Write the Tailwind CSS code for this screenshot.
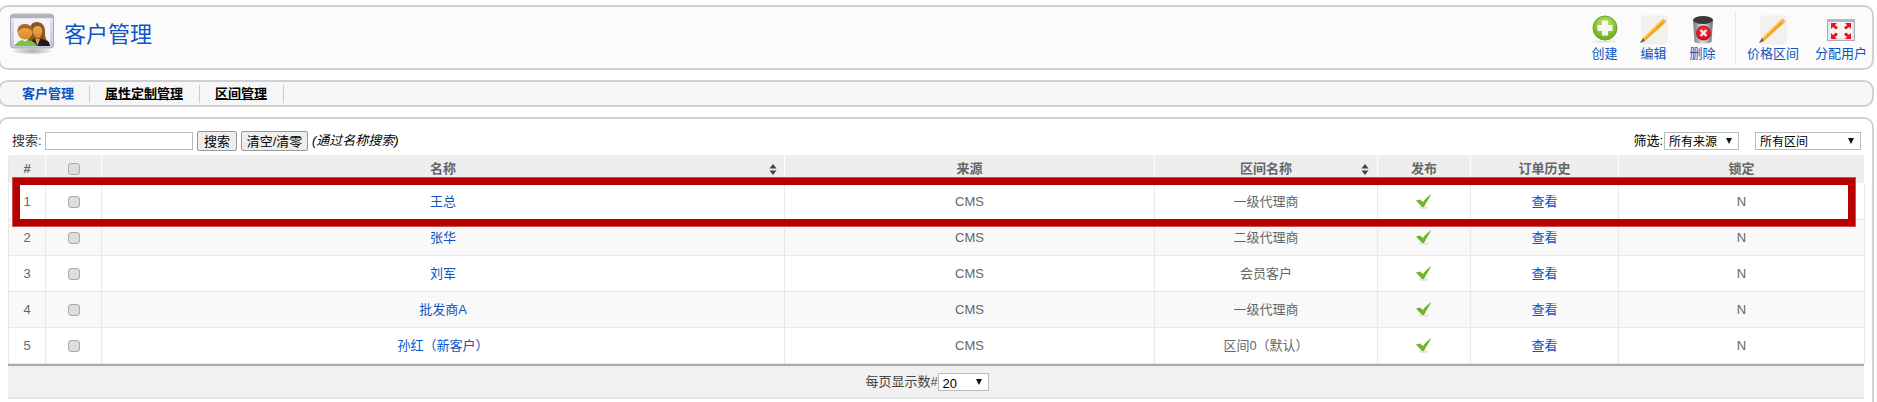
<!DOCTYPE html>
<html lang="zh">
<head>
    <meta charset="UTF-8">
    <title>客户管理</title>
    <script src="https://cdn.jsdelivr.net/npm/@tailwindcss/browser@4"></script>
</head>
<body class="bg-white h-screen overflow-hidden font-['Liberation_Sans','Noto_Sans_CJK_SC',sans-serif] text-[13px] text-[#666]">
    <!-- Title bar -->
    <header class="ml-[-2px] mt-[5px] w-[1876px] h-[65px] flex items-stretch justify-between bg-[#fbfbfb] border-2 border-[#d0d0d0] rounded-[10px]">
        <div class="flex items-center pl-[10px]">
            <svg class="w-[44px] h-[42px] mt-[-8px]" viewBox="0 0 44 42">
                <defs>
                    <linearGradient id="win" x1="0" y1="0" x2="0" y2="1"><stop offset="0" stop-color="#e8e8ee"/><stop offset="1" stop-color="#c4c6d2"/></linearGradient>
                    <linearGradient id="skin" x1="0" y1="0" x2="0" y2="1"><stop offset="0" stop-color="#f0a94e"/><stop offset="1" stop-color="#d98a2a"/></linearGradient>
                    <radialGradient id="shade"><stop offset="0" stop-color="#aaa"/><stop offset="1" stop-color="#eee"/></radialGradient>
                </defs>
                <ellipse cx="22" cy="38" rx="19" ry="3.500" fill="url(#shade)"/>
                <rect x="0.500" y="1" width="43" height="34" rx="3" fill="url(#win)" stroke="#a8aab2"/>
                <rect x="1" y="1.500" width="42" height="3.500" fill="#b2b3b9"/>
                <rect x="4" y="6" width="36" height="25" fill="#f3f3fa"/>
                <path d="M27 9c-5 0-7 3-7 8 0 5-1 8-3 11l4 3h17v-3c-3-2-3-6-3-10 0-5-3-9-8-9z" fill="#8c5522"/>
                <path d="M28 13c3 0 5 3 4 7-1 3-2 5-4 5s-4-2-5-5c-1-4 1-7 5-7z" fill="url(#skin)"/>
                <path d="M23 26h9l7 3 1 4H21z" fill="#1c1c1c"/>
                <path d="M25 26l2.500 7 2.500-7z" fill="#e39a3d"/>
                <circle cx="15" cy="19" r="7.500" fill="url(#skin)"/>
                <path d="M7.500 19c-.5-5 3-8 7.500-8s8 3 7.500 8c-2-3-5-4-7.500-4s-5.500 1-7.500 4z" fill="#a8651f"/>
                <path d="M5 33c1-3 3-5 7-6l3 1.500 3-1.500c5 1 8 3 9 6z" fill="#7cc143"/>
            </svg>
            <h1 class="ml-[10px] mt-[-6px] text-[22px] text-[#0b55c4] font-normal leading-none">客户管理</h1>
        </div>
        <div class="flex items-center text-[13px] text-[#0b55c4]">
            <a class="w-[49px] flex flex-col items-center" href="#create">
                <svg class="w-[28px] h-[28px]" viewBox="0 0 28 28">
                    <defs><radialGradient id="grn" cx="0.5" cy="0.35" r="0.7"><stop offset="0" stop-color="#c9ee6c"/><stop offset="1" stop-color="#5da315"/></radialGradient></defs>
                    <ellipse cx="14" cy="26.500" rx="13" ry="1.200" fill="#e4e4e4"/>
                    <circle cx="14" cy="13" r="12" fill="url(#grn)" stroke="#6aa81f"/>
                    <path d="M11 5.500h6v4.500h4.500v6H17v4.500h-6V16H6.500v-6H11z" fill="#f7f7ef"/>
                </svg>
                <span class="mt-[3px] leading-[15px]">创建</span>
            </a>
            <a class="w-[49px] flex flex-col items-center" href="#edit">
                <svg class="w-[28px] h-[30px] mb-[-2px]" viewBox="0 0 28 30">
                    <path d="M2 1h25v25l-3 3H2z" fill="#f3f1ed" stroke="#e8e6e2" stroke-width="0.600"/>
                    <path d="M0 28L3 23 22 5l3 3L5 26z" fill="#f3a51f"/>
                    <path d="M3 23L21.500 4.500l1 1L4 24z" fill="#fbd25e"/>
                    <path d="M22 5l1.500-1.500 3 3L25 8z" fill="#f2a893"/>
                    <path d="M0 28l3-5 2 3z" fill="#666"/>
                </svg>
                <span class="mt-[3px] leading-[15px]">编辑</span>
            </a>
            <a class="w-[49px] flex flex-col items-center" href="#delete">
                <svg class="w-[24px] h-[30px] mb-[-2px]" viewBox="0 0 24 30">
                    <defs>
                        <linearGradient id="can" x1="0" y1="0" x2="1" y2="0"><stop offset="0" stop-color="#777a80"/><stop offset="0.500" stop-color="#dfe0e3"/><stop offset="1" stop-color="#6e7075"/></linearGradient>
                        <radialGradient id="red" cx="0.5" cy="0.4" r="0.6"><stop offset="0" stop-color="#f5404a"/><stop offset="1" stop-color="#c20815"/></radialGradient>
                    </defs>
                    <path d="M2 5h20l-1.500 22c-3 2-14 2-17 0z" fill="url(#can)"/>
                    <ellipse cx="12" cy="5" rx="10" ry="4" fill="#3a3a3a"/>
                    <circle cx="12.500" cy="18" r="7.500" fill="url(#red)"/>
                    <path d="M9.500 15l6 6m0-6l-6 6" stroke="#f4e8e8" stroke-width="2.400"/>
                </svg>
                <span class="mt-[3px] leading-[15px]">删除</span>
            </a>
            <div class="ml-[8px] h-[53px] w-px bg-[#e8e8e8]"></div>
            <a class="w-[74px] flex flex-col items-center" href="#price">
                <svg class="w-[28px] h-[30px] mb-[-2px]" viewBox="0 0 28 30">
                    <path d="M2 1h25v25l-3 3H2z" fill="#f3f1ed" stroke="#e8e6e2" stroke-width="0.600"/>
                    <path d="M0 28L3 23 22 5l3 3L5 26z" fill="#f3a51f"/>
                    <path d="M3 23L21.500 4.500l1 1L4 24z" fill="#fbd25e"/>
                    <path d="M22 5l1.500-1.500 3 3L25 8z" fill="#f2a893"/>
                    <path d="M0 28l3-5 2 3z" fill="#666"/>
                </svg>
                <span class="mt-[3px] leading-[15px]">价格区间</span>
            </a>
            <a class="w-[62px] flex flex-col items-center" href="#assign">
                <svg class="w-[28px] h-[28px]" viewBox="0 0 28 28">
                    <rect x="0.500" y="4.500" width="27" height="21" fill="#e4e6ee" stroke="#aab" stroke-width="1"/>
                    <rect x="0" y="4" width="28" height="3" fill="#b5b7c0"/>
                    <rect x="3" y="7" width="22" height="16" fill="#f4f5f9"/>
                    <path d="M4 8h6l-2 2 3 2.500-2 2-3-2.500-2 2zM24 8v6l-2-2-3 2.500-2-2 3-2.500-2-2zM4 24v-6l2 2 3-2.500 2 2-3 2.500 2 2zM24 24h-6l2-2-3-2.500 2-2 3 2.500 2-2z" fill="#e8141c"/>
                </svg>
                <span class="mt-[3px] leading-[15px]">分配用户</span>
            </a>
        </div>
    </header>

    <!-- Sub menu -->
    <nav class="ml-[-2px] mt-[10px] w-[1876px] h-[27px] flex items-center bg-[#f6f6f6] border-2 border-[#d0d0d0] rounded-[10px] text-[13px] font-bold">
        <a class="pl-[22px] pr-[15px] text-[#0b55c4] border-r border-[#ccc] leading-[18px]" href="#customers">客户管理</a>
        <a class="pl-[15px] pr-[16px] text-black underline [text-decoration-skip-ink:none] border-r border-[#ccc] leading-[18px]" href="#attrs">属性定制管理</a>
        <a class="pl-[15px] pr-[16px] text-black underline [text-decoration-skip-ink:none] border-r border-[#ccc] leading-[18px]" href="#zones">区间管理</a>
    </nav>

    <!-- Content -->
    <main class="relative ml-[-2px] mt-[10px] w-[1876px] h-[300px] bg-white border-2 border-b-0 border-[#d0d0d0] rounded-t-[10px] pl-[8px] pr-[10px]">
        <form class="flex items-center justify-between h-[20px] mt-[12px] text-[#333]" onsubmit="return false;">
            <div class="flex items-center">
                <label class="ml-[4px] w-[33px]">搜索:</label>
                <input type="text" class="w-[148px] h-[18px] bg-white border border-[#bbb]">
                <button class="ml-[4px] w-[40px] h-[20px] bg-[#eee] border border-[#999] rounded-[2px] text-black">搜索</button>
                <button class="ml-[4px] w-[67px] h-[20px] bg-[#eee] border border-[#999] rounded-[2px] text-black">清空/清零</button>
                <em class="ml-[4px] text-black">(通过名称搜索)</em>
            </div>
            <div class="flex items-center pr-[1px]">
                <label class="mr-[1px] text-black">筛选:</label>
                <div class="relative">
                    <select class="block appearance-none w-[75px] h-[18px] pl-[4px] bg-white border border-[#bbb] text-black text-[12px]"><option>所有来源</option></select>
                    <svg class="absolute right-[7px] top-[6px] w-[6px] h-[6px] pointer-events-none" viewBox="0 0 6 6"><path d="M0 0h6L3 6z" fill="#111"/></svg>
                </div>
                <div class="relative ml-[16px]">
                    <select class="block appearance-none w-[106px] h-[18px] pl-[4px] bg-white border border-[#bbb] text-black text-[12px]"><option>所有区间</option></select>
                    <svg class="absolute right-[7px] top-[6px] w-[6px] h-[6px] pointer-events-none" viewBox="0 0 6 6"><path d="M0 0h6L3 6z" fill="#111"/></svg>
                </div>
            </div>
        </form>

        <table class="mt-[3px] w-[1856px] table-fixed border-collapse text-center">
            <colgroup>
                <col class="w-[37px]"><col class="w-[56px]"><col class="w-[683px]"><col class="w-[370px]">
                <col class="w-[223px]"><col class="w-[93px]"><col class="w-[148px]"><col class="w-[246px]">
            </colgroup>
            <thead class="bg-[#eee] font-bold text-[#666]">
                <tr class="h-[29px]">
                    <th class="border border-white border-l-[#e8e8e8]">#</th>
                    <th class="border border-white"><input type="checkbox" class="appearance-none block mx-auto w-[12px] h-[12px] rounded-[3px] bg-[#ddd] border border-[#aaa]"></th>
                    <th class="relative border border-white">名称<svg class="absolute right-[7px] top-[9px] w-[8px] h-[11px]" viewBox="0 0 8 11"><path d="M4 0l3.500 4.500h-7zM4 11L.5 6.500h7z" fill="#444"/></svg></th>
                    <th class="border border-white">来源</th>
                    <th class="relative border border-white">区间名称<svg class="absolute right-[8px] top-[9px] w-[8px] h-[11px]" viewBox="0 0 8 11"><path d="M4 0l3.500 4.500h-7zM4 11L.5 6.500h7z" fill="#444"/></svg></th>
                    <th class="border border-white">发布</th>
                    <th class="border border-white">订单历史</th>
                    <th class="border border-white">锁定</th>
                </tr>
            </thead>
            <tbody>
                <tr class="h-[36px] bg-white">
                    <td class="border border-[#e8e8e8]">1</td>
                    <td class="border border-[#e8e8e8]"><input type="checkbox" class="appearance-none block mx-auto w-[12px] h-[12px] rounded-[3px] bg-[#ddd] border border-[#aaa]"></td>
                    <td class="border border-[#e8e8e8]"><a class="text-[#0b55c4]" href="#1">王总</a></td>
                    <td class="border border-[#e8e8e8]">CMS</td>
                    <td class="border border-[#e8e8e8]">一级代理商</td>
                    <td class="border border-[#e8e8e8]"><svg class="mx-auto w-[16px] h-[15px]" viewBox="0 0 16 15"><ellipse cx="7.500" cy="13.800" rx="5" ry="1" fill="#e2e2e2"/><path d="M0 6.500L4 5.500 7 8C9 5 12 2 15.500 0 13.500 3.500 10.500 8 8 13L6 13z" fill="#6cb52f"/></svg></td>
                    <td class="border border-[#e8e8e8]"><a class="text-[#0b55c4]" href="#h1">查看</a></td>
                    <td class="border border-[#e8e8e8]">N</td>
                </tr>
                <tr class="h-[36px] bg-[#f9f9f9]">
                    <td class="border border-[#e8e8e8]">2</td>
                    <td class="border border-[#e8e8e8]"><input type="checkbox" class="appearance-none block mx-auto w-[12px] h-[12px] rounded-[3px] bg-[#ddd] border border-[#aaa]"></td>
                    <td class="border border-[#e8e8e8]"><a class="text-[#0b55c4]" href="#2">张华</a></td>
                    <td class="border border-[#e8e8e8]">CMS</td>
                    <td class="border border-[#e8e8e8]">二级代理商</td>
                    <td class="border border-[#e8e8e8]"><svg class="mx-auto w-[16px] h-[15px]" viewBox="0 0 16 15"><ellipse cx="7.500" cy="13.800" rx="5" ry="1" fill="#e2e2e2"/><path d="M0 6.500L4 5.500 7 8C9 5 12 2 15.500 0 13.500 3.500 10.500 8 8 13L6 13z" fill="#6cb52f"/></svg></td>
                    <td class="border border-[#e8e8e8]"><a class="text-[#0b55c4]" href="#h2">查看</a></td>
                    <td class="border border-[#e8e8e8]">N</td>
                </tr>
                <tr class="h-[36px] bg-white">
                    <td class="border border-[#e8e8e8]">3</td>
                    <td class="border border-[#e8e8e8]"><input type="checkbox" class="appearance-none block mx-auto w-[12px] h-[12px] rounded-[3px] bg-[#ddd] border border-[#aaa]"></td>
                    <td class="border border-[#e8e8e8]"><a class="text-[#0b55c4]" href="#3">刘军</a></td>
                    <td class="border border-[#e8e8e8]">CMS</td>
                    <td class="border border-[#e8e8e8]">会员客户</td>
                    <td class="border border-[#e8e8e8]"><svg class="mx-auto w-[16px] h-[15px]" viewBox="0 0 16 15"><ellipse cx="7.500" cy="13.800" rx="5" ry="1" fill="#e2e2e2"/><path d="M0 6.500L4 5.500 7 8C9 5 12 2 15.500 0 13.500 3.500 10.500 8 8 13L6 13z" fill="#6cb52f"/></svg></td>
                    <td class="border border-[#e8e8e8]"><a class="text-[#0b55c4]" href="#h3">查看</a></td>
                    <td class="border border-[#e8e8e8]">N</td>
                </tr>
                <tr class="h-[36px] bg-[#f9f9f9]">
                    <td class="border border-[#e8e8e8]">4</td>
                    <td class="border border-[#e8e8e8]"><input type="checkbox" class="appearance-none block mx-auto w-[12px] h-[12px] rounded-[3px] bg-[#ddd] border border-[#aaa]"></td>
                    <td class="border border-[#e8e8e8]"><a class="text-[#0b55c4]" href="#4">批发商A</a></td>
                    <td class="border border-[#e8e8e8]">CMS</td>
                    <td class="border border-[#e8e8e8]">一级代理商</td>
                    <td class="border border-[#e8e8e8]"><svg class="mx-auto w-[16px] h-[15px]" viewBox="0 0 16 15"><ellipse cx="7.500" cy="13.800" rx="5" ry="1" fill="#e2e2e2"/><path d="M0 6.500L4 5.500 7 8C9 5 12 2 15.500 0 13.500 3.500 10.500 8 8 13L6 13z" fill="#6cb52f"/></svg></td>
                    <td class="border border-[#e8e8e8]"><a class="text-[#0b55c4]" href="#h4">查看</a></td>
                    <td class="border border-[#e8e8e8]">N</td>
                </tr>
                <tr class="h-[36px] bg-white">
                    <td class="border border-[#e8e8e8]">5</td>
                    <td class="border border-[#e8e8e8]"><input type="checkbox" class="appearance-none block mx-auto w-[12px] h-[12px] rounded-[3px] bg-[#ddd] border border-[#aaa]"></td>
                    <td class="border border-[#e8e8e8]"><a class="text-[#0b55c4]" href="#5">孙红（新客户）</a></td>
                    <td class="border border-[#e8e8e8]">CMS</td>
                    <td class="border border-[#e8e8e8]">区间0（默认）</td>
                    <td class="border border-[#e8e8e8]"><svg class="mx-auto w-[16px] h-[15px]" viewBox="0 0 16 15"><ellipse cx="7.500" cy="13.800" rx="5" ry="1" fill="#e2e2e2"/><path d="M0 6.500L4 5.500 7 8C9 5 12 2 15.500 0 13.500 3.500 10.500 8 8 13L6 13z" fill="#6cb52f"/></svg></td>
                    <td class="border border-[#e8e8e8]"><a class="text-[#0b55c4]" href="#h5">查看</a></td>
                    <td class="border border-[#e8e8e8]">N</td>
                </tr>
            </tbody>
        </table>
        <div class="w-[1856px] h-[35px] pr-[18px] flex items-center justify-center bg-[#f1f1f1] border-t-2 border-t-[#aaa] border-b-2 border-b-[#e8e8e8] text-[#444]">
            <span>每页显示数#</span>
            <div class="relative">
                <select class="block appearance-none w-[51px] h-[18px] pl-[4px] bg-white border border-[#bbb] text-black text-[13px]"><option>20</option></select>
                <svg class="absolute right-[7px] top-[6px] w-[6px] h-[6px] pointer-events-none" viewBox="0 0 6 6"><path d="M0 0h6L3 6z" fill="#111"/></svg>
            </div>
        </div>

        <!-- Red annotation box drawn over the first row -->
        <div class="absolute left-[12px] top-[58px] w-[1844px] h-[50px] border-[8px] border-[#b80000] outline outline-1 -outline-offset-1 outline-[#d05050]"></div>
    </main>
</body>
</html>
